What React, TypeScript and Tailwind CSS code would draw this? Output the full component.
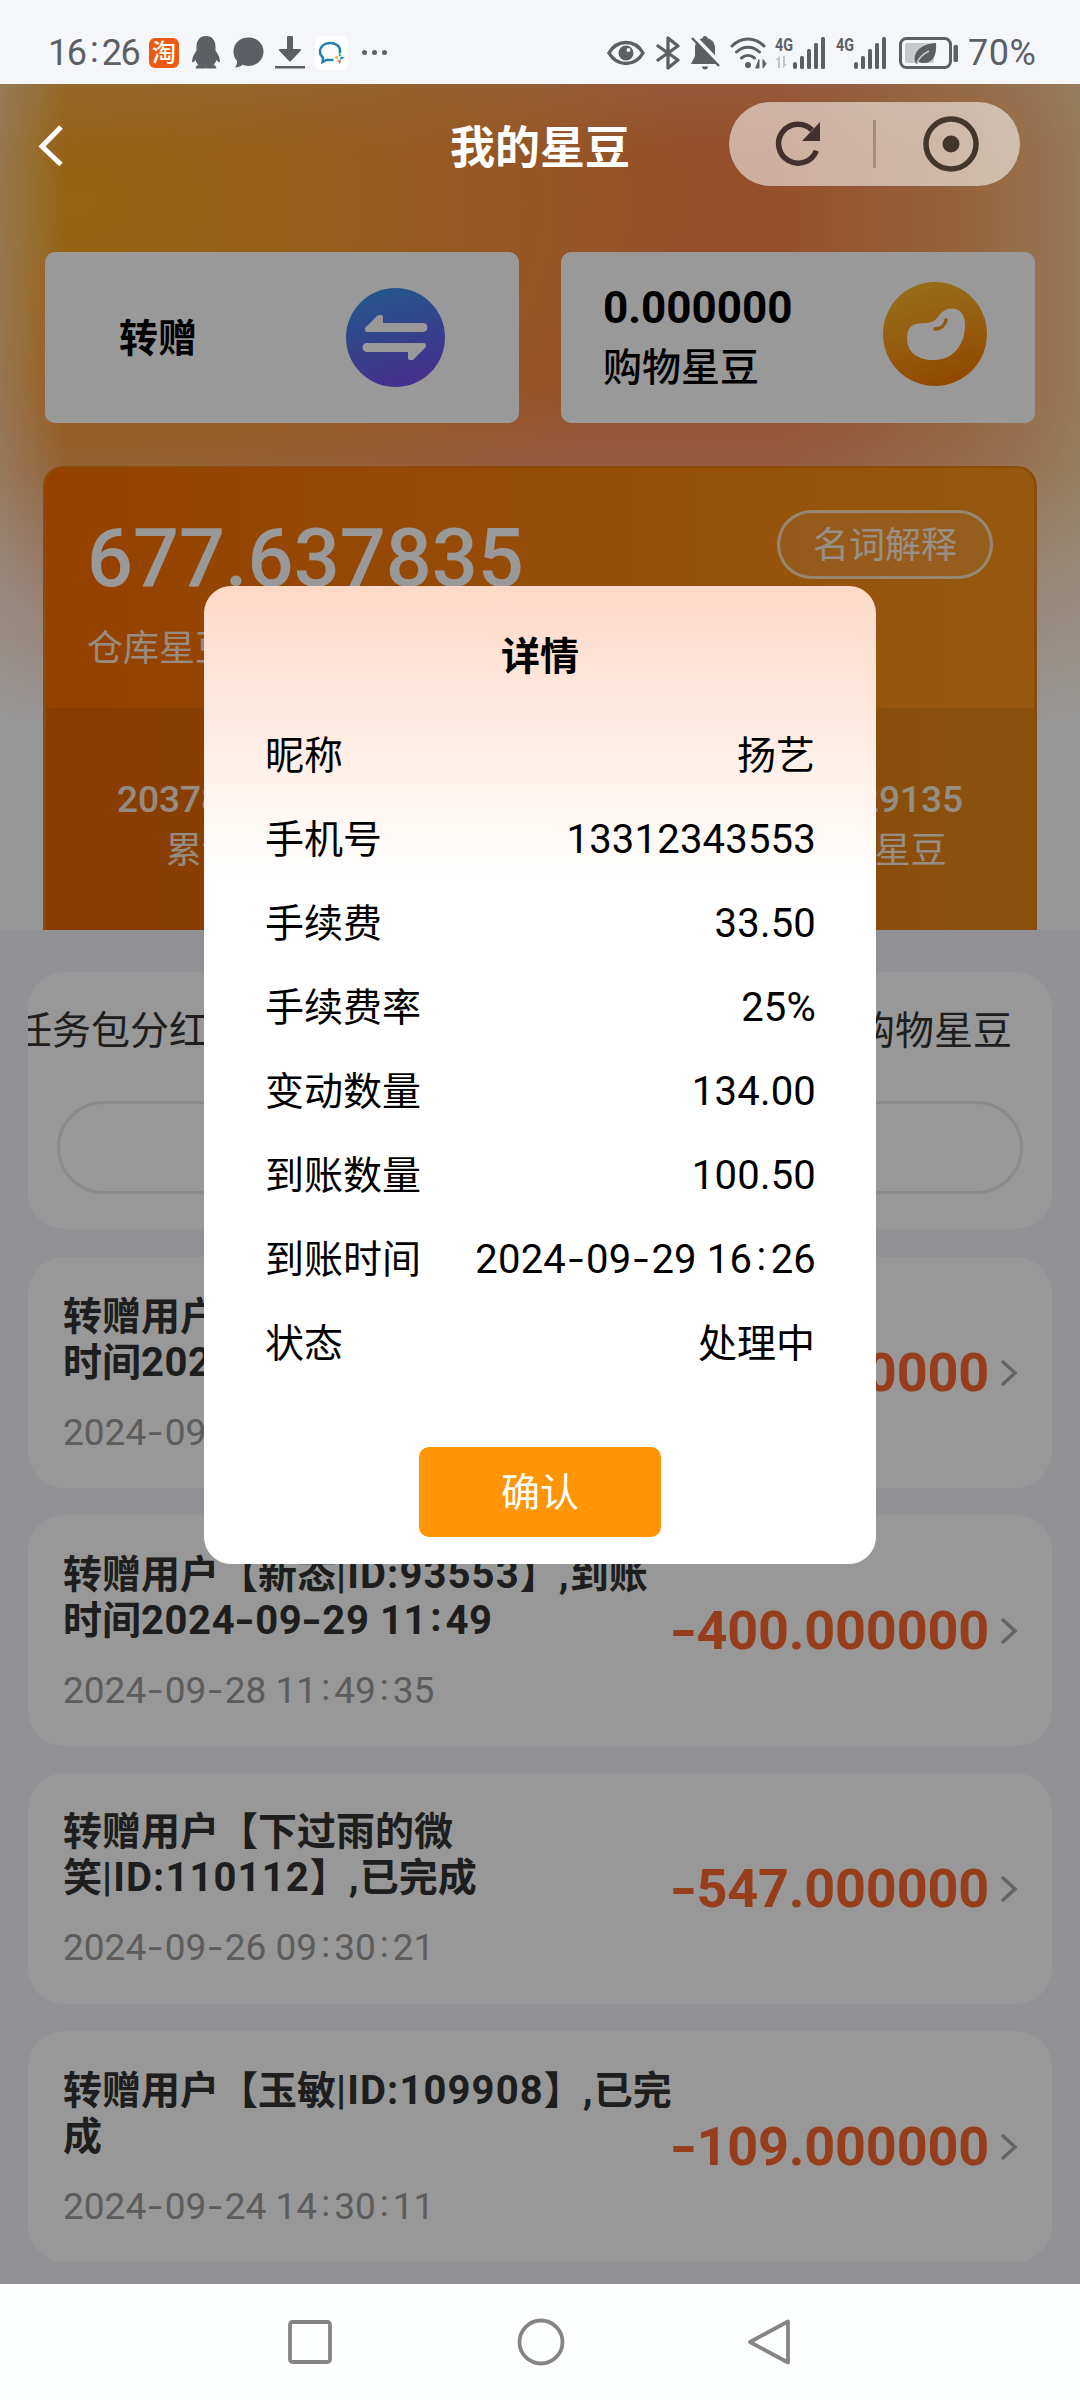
import React from 'react';

// Separators are about half an em wide, so date strings get extra room around them
const Num = ({ text }: { text: string }) => (
  <>
    {text.split(/([-:])/).map((part, i) => {
      if (part === '-') {
        return <span key={i} className="inline-block w-[0.5em] scale-x-[1.35] text-center">-</span>;
      }
      if (part === ':') {
        return <span key={i} className="relative -top-[0.07em] inline-block w-[0.46em] text-center">:</span>;
      }
      return <React.Fragment key={i}>{part}</React.Fragment>;
    })}
  </>
);

// Record titles mix Chinese with ids and dates, the latin runs are set a bit wider
const Title = ({ text }: { text: string }) => (
  <>
    {text.split(/([|A-Z0-9:,]+)/).map((part, i) => (
      <span key={i} className={i % 2 ? 'text-[40px] tracking-[1.1px]' : ''}>{part}</span>
    ))}
  </>
);

const details = [
  { label: '昵称', value: '扬艺' },
  { label: '手机号', value: '13312343553' },
  { label: '手续费', value: '33.50' },
  { label: '手续费率', value: '25%' },
  { label: '变动数量', value: '134.00' },
  { label: '到账数量', value: '100.50' },
  { label: '到账时间', value: '2024-09-29 16:26' },
  { label: '状态', value: '处理中' },
];

const records = [
  { head: '转赠用户【扬艺|ID:93553】,到账', tail: '时间', stamp: '2024-09-29 16:26', date: '2024-09-28 16:26:42', amount: '-134.000000' },
  { head: '转赠用户【新态|ID:93553】,到账', tail: '时间', stamp: '2024-09-29 11:49', date: '2024-09-28 11:49:35', amount: '-400.000000' },
  { head: '转赠用户【下过雨的微', tail: '笑|ID:110112】,已完成', stamp: '', date: '2024-09-26 09:30:21', amount: '-547.000000' },
  { head: '转赠用户【玉敏|ID:109908】,已完', tail: '成', stamp: '', date: '2024-09-24 14:30:11', amount: '-109.000000' },
];

const Signal = ({ data }: { data?: boolean }) => (
  <svg className="h-[34px] w-[52px] overflow-visible" viewBox="0 0 52 34" fill="#5d5f65">
    <text x="0" y="15" fontSize="18" fontWeight="700" textLength="18" lengthAdjust="spacingAndGlyphs">4G</text>
    {data && (
      <g fill="#c3c4c9">
        <path d="M5 20v12H3V24H0z" />
        <path d="M8 20v12l4-4h-2v-8z" />
      </g>
    )}
    <rect x="18" y="26" width="4" height="7" rx="2" />
    <rect x="25" y="20" width="4" height="13" rx="1.5" />
    <rect x="32" y="13" width="4" height="20" rx="1.5" />
    <rect x="39" y="7" width="4" height="26" rx="1.5" />
    <rect x="46" y="1" width="4" height="32" rx="1.5" />
  </svg>
);

const StatusBar = () => (
  <div className="flex h-[84px] w-full shrink-0 items-center bg-[#f5f6fa] pt-[21px] pr-[43px] pl-[48px] text-[#5d5f65]">
    <span className="w-[101px] text-[36px] leading-none tracking-[-1.6px] whitespace-nowrap"><Num text="16:26" /></span>
    <span className="flex size-[30px] items-center justify-center rounded-[6px] bg-[#ec5a12] text-[24px] leading-none font-medium text-white">淘</span>
    <svg className="ml-[13px] h-[33px] w-[28px]" viewBox="0 0 28 33" fill="#5d5f65">
      <path d="M14 0C7.500 0 4.500 5 4.500 10.500v4C2 18 0 22 0 26c1 1 2.500-.5 3.700-2 .4 2 1.300 3.500 2.600 5-2 1-3 2-2.500 3.500H13l1-.5 1 .5h9.200c.5-1.500-.5-2.500-2.500-3.500 1.300-1.500 2.200-3 2.600-5 1.200 1.500 2.700 3 3.700 2 0-4-2-8-4.500-11.500v-4C23.500 5 20.500 0 14 0z" />
    </svg>
    <svg className="ml-[13px] h-[31px] w-[31px]" viewBox="0 0 31 31" fill="#5d5f65">
      <path d="M15.500.5C7 .5.500 6.500.500 14.500c0 4 1.300 7 3.500 9.500.3 2.500-.5 4.500-2 6.500 3 0 5.500-1 7.500-2.700 1.800.7 3.800 1.200 6 1.200C24 29 30.500 22.500 30.500 14.500S24 .500 15.500.500z" />
    </svg>
    <svg className="ml-[11px] h-[33px] w-[30px]" viewBox="0 0 30 33" fill="#5d5f65">
      <path d="M13 1h4v13h8L15 24.500 5 14h8z" stroke="#5d5f65" strokeWidth="2" strokeLinejoin="round" />
      <rect x="0" y="30" width="30" height="2.500" />
    </svg>
    <span className="ml-[10px] flex h-[34px] w-[33px] items-center justify-center rounded-[6px] bg-white">
      <svg className="h-[24px] w-[28px]" viewBox="0 0 28 24" fill="none">
        <path d="M22 12V9.500C22 5 17.500 2 12 2S2 5.500 2 10.500c0 3 1.300 4.800 3 6.200L4.500 21l4.300-2.300c2 .4 4.700.5 6.700 0" stroke="#1f7fb5" strokeWidth="2.400" />
        <path d="M20.500 10.500l3 4-2.500 1z" fill="#3fa845" />
        <path d="M27 16.500l-5 2.500.5-3.500z" fill="#1f7fb5" />
        <path d="M21.500 23l-2-4 3.500.5z" fill="#e0533d" />
        <path d="M15.500 17l4.500-2.500v3.500z" fill="#f3b71b" />
      </svg>
    </span>
    <span className="ml-[14px] flex gap-[5px]">
      <i className="size-[5px] rounded-full bg-[#5d5f65]" />
      <i className="size-[5px] rounded-full bg-[#5d5f65]" />
      <i className="size-[5px] rounded-full bg-[#5d5f65]" />
    </span>

    <span className="ml-auto flex items-center">
      <svg className="h-[26px] w-[38px]" viewBox="0 0 38 26">
        <path d="M2 13C6 6 12 2.500 19 2.500S32 6 36 13c-4 7-10 10.500-17 10.500S6 20 2 13z" fill="none" stroke="#5d5f65" strokeWidth="3.500" />
        <circle cx="19" cy="13" r="7.500" fill="#5d5f65" />
        <circle cx="21.500" cy="10" r="2" fill="#f5f6fa" />
      </svg>
      <svg className="ml-[11px] h-[34px] w-[24px]" viewBox="0 0 24 34" fill="none" stroke="#5d5f65" strokeWidth="3.300" strokeLinejoin="round" strokeLinecap="round">
        <path d="M2 10l20 14-10 8V2l10 8L2 24" />
      </svg>
      <svg className="ml-[11px] h-[34px] w-[30px]" viewBox="0 0 30 34">
        <path d="M14 0c1.500 0 2.500 1 2.500 2.300C21.500 3.500 24 7.500 24 12v8l3.500 8H0l4-8v-8c0-4.500 2.500-8.500 7.500-9.700C11.500 1 12.500 0 14 0zM11 30.500h6c0 2-1.300 3-3 3s-3-1-3-3z" fill="#5d5f65" />
        <path d="M3 1l27 28" stroke="#f5f6fa" strokeWidth="5" />
        <path d="M1 2l27 28" stroke="#5d5f65" strokeWidth="2.500" />
      </svg>
      <svg className="ml-[9px] h-[34px] w-[37px]" viewBox="0 0 37 34" fill="none" stroke="#5d5f65" strokeWidth="3" strokeLinecap="round">
        <path d="M2 10C11 .500 25 .500 34 10M6.500 16c7-6.500 16-6.500 23 0M11.500 22c4-3.500 9-3.500 13 0" />
        <circle cx="18" cy="29" r="3" fill="#5d5f65" stroke="none" />
        <path d="M29 24v8h-3zM33 24v8l3-4z" fill="#5d5f65" strokeWidth="1" />
      </svg>
      <span className="ml-[8px] flex"><Signal data /></span>
      <span className="ml-[9px] flex"><Signal /></span>
      <svg className="ml-[10px] h-[34px] w-[62px]" viewBox="0 0 62 34">
        <rect x="2.500" y="2.500" width="50" height="29" rx="6" fill="none" stroke="#5d5f65" strokeWidth="3" />
        <rect x="7" y="7" width="29" height="20" rx="2" fill="#c8c9cd" />
        <path d="M38 7c1 12-3 20-12 20-2 0-4-.5-5-1.500l-2 2.500-1.500-1C14 17 22 8 38 7z" fill="#5d5f65" />
        <path d="M19 27c2-5 6-9 12-12" stroke="#c8c9cd" strokeWidth="1.500" fill="none" />
        <rect x="55.500" y="9" width="4.500" height="17" rx="1.500" fill="#5d5f65" />
      </svg>
      <span className="ml-[8px] w-[69px] text-[36px] leading-none tracking-[0.5px] whitespace-nowrap">70%</span>
    </span>
  </div>
);

const NavBar = () => (
  <div className="relative z-20 grid h-[168px] grid-cols-3 items-start px-[36px] pt-[18px]">
    <svg className="mt-[22px] h-[44px] w-[28px]" viewBox="0 0 28 44" fill="none" stroke="white" strokeWidth="5">
      <path d="M25 3L6 22.500l19 18" />
    </svg>
    <h1 className="pt-[17px] text-center text-[45px] leading-[60px] font-bold text-white">我的星豆</h1>
    <div className="mr-[24px] flex h-[84px] w-[291px] items-center justify-between justify-self-end rounded-full bg-white/55 pr-[41px] pl-[45px]">
      <svg className="size-[48px]" viewBox="0 0 48 48">
        <path d="M38 10A19.500 19.500 0 1 0 42.300 30.700" fill="none" stroke="#43302d" strokeWidth="5.500" />
        <path d="M46 2v19H28z" fill="#43302d" />
      </svg>
      <i className="ml-[3px] h-[48px] w-[3px] bg-[#a58a80]" />
      <svg className="size-[56px]" viewBox="0 0 56 56">
        <circle cx="28" cy="28" r="25" fill="none" stroke="#43362a" strokeWidth="5.500" />
        <circle cx="28" cy="28" r="8.500" fill="#43362a" />
      </svg>
    </div>
  </div>
);

const TransferIcon = () => (
  <svg className="size-[99px]" viewBox="0 0 99 99">
    <defs>
      <linearGradient id="transfer" x1="0.200" y1="0" x2="0.500" y2="1">
        <stop offset="0" stopColor="#3c92ea" />
        <stop offset="0.550" stopColor="#586ee8" />
        <stop offset="1" stopColor="#7650ee" />
      </linearGradient>
    </defs>
    <circle cx="49.500" cy="49.500" r="49.500" fill="url(#transfer)" />
    <g fill="#fff" stroke="#fff" strokeWidth="4" strokeLinejoin="round">
      <path d="M21 41l12-12 2 0 0 8h42a2 2 0 0 1 0 5H21z" />
      <path d="M78 58L66 70l-2 0 0-8H21a2 2 0 0 1 0-5h57z" />
    </g>
  </svg>
);

const BeanIcon = () => (
  <svg className="mb-[7px] size-[104px]" viewBox="0 0 104 104">
    <defs>
      <linearGradient id="bean" x1="0.300" y1="0" x2="0.600" y2="1">
        <stop offset="0" stopColor="#fdb82c" />
        <stop offset="0.600" stopColor="#f99417" />
        <stop offset="1" stopColor="#f27700" />
      </linearGradient>
    </defs>
    <circle cx="52" cy="52" r="52" fill="url(#bean)" />
    <path d="M24 56C24 47 28 42 36 41.500c7-.5 13 .5 18-5.500 4-5 7-9.500 15-9.500 9 0 13 7 13 16 0 11-3 19-8 25-6 7-14 10.500-23 10.500C34 78 24 70 24 56z" fill="#fff" />
    <path d="M63 38c-1 5-5 9-11 9" stroke="#f0951d" strokeWidth="3.500" fill="none" strokeLinecap="round" />
  </svg>
);

const DetailModal = () => (
  <div className="flex h-[978px] w-[672px] flex-col rounded-[27px] bg-white bg-linear-to-b from-[#fdd9c7] to-white to-30% px-[61px] text-black">
    <h2 className="mt-[41px] text-center text-[39px] leading-[60px] font-bold">详情</h2>
    <div className="mt-[25px]">
      {details.map((row) => (
        <div key={row.label} className="flex h-[84px] items-center justify-between pt-[4px] text-[39px] leading-none">
          <span>{row.label}</span>
          {/^[\d]/.test(row.value) ? (
            <span className="-mr-px text-[40px] tracking-[0.2px]"><Num text={row.value} /></span>
          ) : (
            <span>{row.value}</span>
          )}
        </div>
      ))}
    </div>
    <button className="mt-[63px] h-[90px] w-[242px] self-center rounded-[10px] bg-[#ff9505] pt-[2px] text-[39px] leading-none text-white">确认</button>
  </div>
);

export default function App() {
  return (
    <div className="flex h-[2400px] w-[1080px] flex-col overflow-hidden [font-family:Roboto,'Noto_Sans_CJK_SC',sans-serif]">
      <StatusBar />

      <div className="relative h-[2200px] overflow-hidden bg-[#f0f1f8]">
        <div className="h-[846px] bg-[linear-gradient(180deg,rgba(255,255,255,0.12)_0%,transparent_8%,transparent_36%,rgba(255,255,255,0.1)_45%,rgba(255,255,255,0.6)_62%,#fcfcfc_76%),linear-gradient(90deg,rgba(250,225,190,0.6)_0%,transparent_6%),linear-gradient(270deg,#fbcb94_0%,rgba(251,190,120,0.6)_10%,transparent_28%),radial-gradient(620px_420px_at_7%_14%,#fca822_0%,rgba(252,168,34,0.75)_35%,transparent_100%),linear-gradient(180deg,#f98548_0%,#f98548_35%,#fa9062_50%)]">
          <NavBar />

          {/* 转赠 / 购物星豆 */}
          <div className="flex justify-between px-[45px] text-black">
            <div className="flex h-[171px] w-[474px] items-center justify-between rounded-[10px] bg-white pr-[74px] pl-[74px]">
              <span className="pt-[3px] text-[39px] leading-none font-bold">转赠</span>
              <TransferIcon />
            </div>
            <div className="flex h-[171px] w-[474px] items-center justify-between rounded-[10px] bg-white pr-[48px] pl-[42px]">
              <div className="pt-[1px]">
                <p className="text-[44px] leading-[60px] font-bold">0.000000</p>
                <p className="text-[39px] leading-[60px] font-medium">购物星豆</p>
              </div>
              <BeanIcon />
            </div>
          </div>

          {/* 仓库星豆 */}
          <div className="mx-[43px] mt-[43px] flex h-[464px] flex-col overflow-hidden rounded-t-[20px] border-x-[3px] border-t-[2px] border-[#e87f12] bg-linear-to-r from-[#f86c00] to-[#fb941a] text-white">
            <div className="flex h-[240px] justify-between pr-[41px] pl-[41px]">
              <div>
                <p className="mt-[46px] text-[81px] leading-[90px] font-medium">677.637835</p>
                <p className="mt-[18px] text-[36px] leading-[54px] text-white/85">仓库星豆</p>
              </div>
              <span className="mt-[42px] flex h-[69px] w-[216px] items-center justify-center rounded-full border-[3px] border-white/70 bg-white/10 pt-[2px] text-[36px] leading-none text-white/85">名词解释</span>
            </div>
            <div className="flex flex-1 justify-between bg-black/8 px-[71px] pt-[67px] text-center text-[36px] text-white/85">
              <div>
                <p className="text-[37px] leading-[50px] font-medium">20378.637835</p>
                <p className="mt-[1px] leading-[50px]">累计星豆</p>
              </div>
              <div>
                <p className="text-[37px] leading-[50px] font-medium">8012.29135</p>
                <p className="mt-[1px] pr-[13px] leading-[50px]">可提现星豆</p>
              </div>
            </div>
          </div>
        </div>

        {/* Tabs */}
        <div className="mx-[28px] mt-[42px] h-[257px] rounded-[36px] bg-[#fdfdfd]">
          <div className="flex h-[116px] items-center justify-between overflow-hidden pt-[3px] pr-[40px] text-[39px] leading-none text-[#333]">
            <span className="-ml-[15px]">任务包分红</span>
            <span>购物星豆</span>
          </div>
          <div className="mx-[29px] mt-[13px] h-[93px] rounded-full border-[3px] border-[#e6e6e6]" />
        </div>

        <div className="mx-[28px] mt-[28px] flex flex-col gap-[27px]">
          {records.map((item) => (
            <div key={item.amount} className="flex h-[231px] items-center justify-between rounded-[36px] bg-[#fdfdfd] pr-[34px] pl-[35px]">
              <div className="pt-[6px] whitespace-nowrap">
                <p className="text-[39px] leading-[45px] font-bold text-[#333]">
                  <Title text={item.head} />
                  <br />
                  <Title text={item.tail} />
                  <span className="text-[40px] tracking-[0.6px]"><Num text={item.stamp} /></span>
                </p>
                <p className="mt-[22px] text-[37px] leading-[50px] text-[#999]"><Num text={item.date} /></p>
              </div>
              <div className="-ml-[40px] flex items-center">
                <span className="text-[54px] leading-none font-bold tracking-[-0.2px] text-[#fa6730]"><Num text={item.amount} /></span>
                <svg className="ml-[11px] h-[28px] w-[18px]" viewBox="0 0 18 28" fill="none" stroke="#a6a6a6" strokeWidth="3.500" strokeLinecap="round">
                  <path d="M3 3l12 11L3 25" />
                </svg>
              </div>
            </div>
          ))}
        </div>

        <div className="absolute inset-0 z-10 flex items-start justify-center bg-black/40 pt-[502px]">
          <DetailModal />
        </div>
      </div>

      {/* System navigation */}
      <div className="flex h-[116px] shrink-0 items-center justify-center bg-[#fdfefe]">
        <svg className="size-[46px]" viewBox="0 0 46 46" fill="none" stroke="#858585" strokeWidth="3.800">
          <rect x="3" y="3" width="40" height="40" rx="2.500" />
        </svg>
        <svg className="ml-[184px] size-[48px]" viewBox="0 0 48 48" fill="none" stroke="#858585" strokeWidth="3.800">
          <circle cx="24" cy="24" r="21.500" />
        </svg>
        <svg className="ml-[182px] size-[46px]" viewBox="0 0 46 46" fill="none" stroke="#858585" strokeWidth="3.800" strokeLinejoin="round">
          <path d="M41 2.500v41L3 23z" />
        </svg>
      </div>
    </div>
  );
}
